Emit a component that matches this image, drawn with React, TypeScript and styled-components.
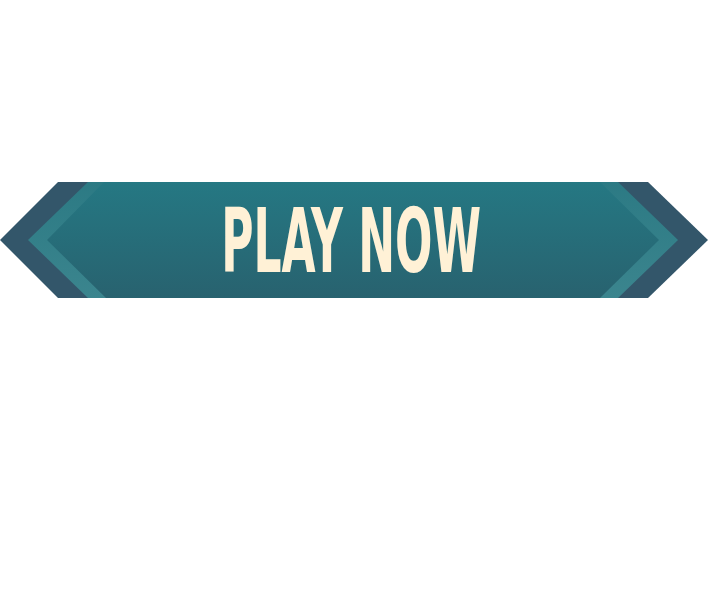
import React from "react";
import styled, { createGlobalStyle } from "styled-components";

const Global = createGlobalStyle`
  html, body { margin: 0; padding: 0; background: #ffffff; }
  #root { width: 710px; height: 599px; }
`;

const Page = styled.div`
  width: 710px;
  height: 599px;
  display: flex;
  flex-direction: column;
  padding-top: 182px;
  box-sizing: border-box;
`;

const Button = styled.button`
  position: relative;
  width: 710px;
  height: 116px;
  padding: 0;
  margin: 0;
  border: none;
  background: transparent;
  cursor: pointer;
  display: flex;
  align-items: center;
  justify-content: center;
`;

const Shape = styled.svg`
  position: absolute;
  left: 0;
  top: 0;
  width: 710px;
  height: 116px;
`;

const Label = styled.span`
  position: relative;
  display: inline-block;
  font-family: "DejaVu Sans Condensed", "DejaVu Sans", sans-serif;
  font-weight: 700;
  font-size: 89px;
  line-height: 1;
  color: #fff1d6;
  transform: scaleX(0.55);
  margin-left: -8px;
  margin-top: 2px;
  white-space: nowrap;
`;

export default function App() {
  return (
    <>
      <Global />
      <Page>
        <Button>
          <Shape viewBox="0 0 710 116">
            <defs>
              <linearGradient id="main" x1="0" y1="0" x2="0" y2="1">
                <stop offset="0" stopColor="#257883" />
                <stop offset="1" stopColor="#28626f" />
              </linearGradient>
              <linearGradient id="band" x1="0" y1="0" x2="0" y2="1">
                <stop offset="0" stopColor="#2c7a84" />
                <stop offset="1" stopColor="#3b858e" />
              </linearGradient>
            </defs>
            <polygon points="58,0 648,0 708,58 648,116 58,116 0,58" fill="#33566a" />
            <polygon points="88,0 618,0 678,58 618,116 88,116 28,58" fill="url(#band)" />
            <polygon points="104,0 600,0 659,58 600,116 106,116 47,58" fill="url(#main)" />
          </Shape>
          <Label>PLAY NOW</Label>
        </Button>
      </Page>
    </>
  );
}
